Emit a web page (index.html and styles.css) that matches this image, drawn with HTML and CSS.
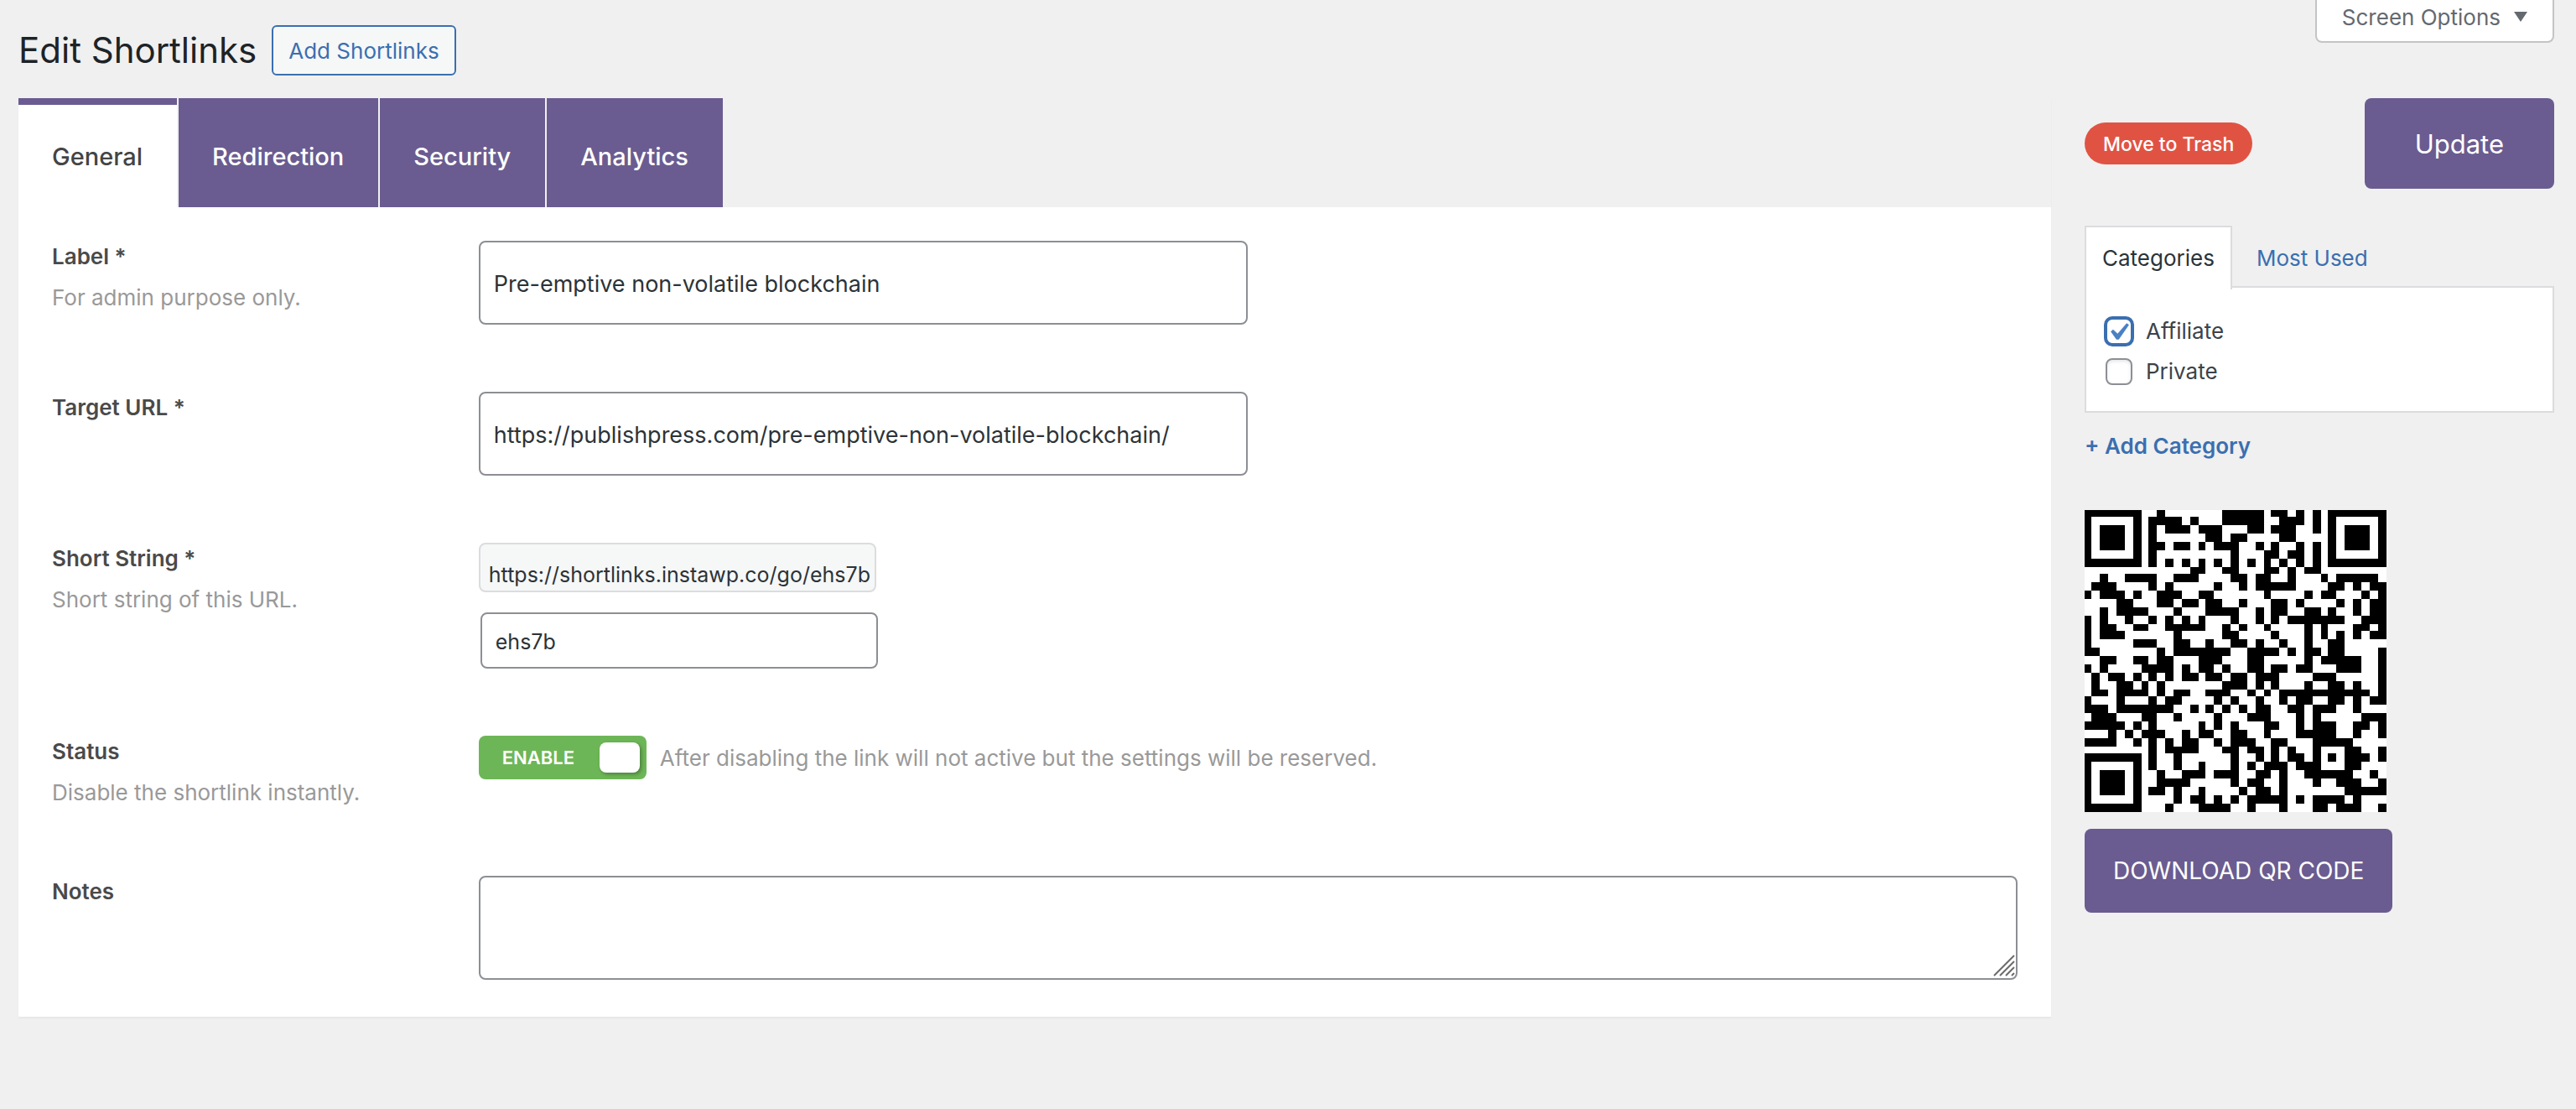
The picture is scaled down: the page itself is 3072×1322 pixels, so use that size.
FILE: index.html
```html
<!DOCTYPE html>
<html lang="en">
<head>
    <meta charset="UTF-8">
    <meta name="viewport" content="width=device-width, initial-scale=1.0">
    <title>Edit Shortlinks</title>
    <link rel="stylesheet" href="styles.css">
</head>
<body>
    <header class="page-header">
        <div class="page-title">
            <h1>Edit Shortlinks</h1>
            <a href="#" class="title-action">Add Shortlinks</a>
        </div>
        <button type="button" class="screen-options">
            Screen Options
            <svg width="16" height="12" viewBox="0 0 16 12" aria-hidden="true"><path d="M0 0h16L8 12z" fill="currentColor"/></svg>
        </button>
    </header>

    <form class="page-body">
        <main class="editor">
            <nav class="tabs">
                <a href="#general" class="tab active">General</a>
                <a href="#redirection" class="tab">Redirection</a>
                <a href="#security" class="tab">Security</a>
                <a href="#analytics" class="tab">Analytics</a>
            </nav>

            <section class="panel" id="general">
                <div class="field">
                    <div class="field-info">
                        <label for="linkLabel">Label *</label>
                        <p>For admin purpose only.</p>
                    </div>
                    <div class="field-control">
                        <input type="text" id="linkLabel" class="text-input" value="Pre-emptive non-volatile blockchain">
                    </div>
                </div>

                <div class="field">
                    <div class="field-info">
                        <label for="targetUrl">Target URL *</label>
                    </div>
                    <div class="field-control">
                        <input type="text" id="targetUrl" class="text-input" value="https://publishpress.com/pre-emptive-non-volatile-blockchain/">
                    </div>
                </div>

                <div class="field">
                    <div class="field-info">
                        <label for="shortString">Short String *</label>
                        <p>Short string of this URL.</p>
                    </div>
                    <div class="field-control short-string">
                        <input type="text" class="short-preview" value="https://shortlinks.instawp.co/go/ehs7b" aria-label="Short URL" readonly>
                        <input type="text" id="shortString" class="short-input" value="ehs7b">
                    </div>
                </div>

                <div class="field">
                    <div class="field-info">
                        <label for="status">Status</label>
                        <p>Disable the shortlink instantly.</p>
                    </div>
                    <div class="field-control status-control">
                        <label class="switch">
                            <input type="checkbox" id="status" checked>
                            <span class="switch-text">ENABLE</span>
                            <span class="switch-knob"></span>
                        </label>
                        <span class="help-text">After disabling the link will not active but the settings will be reserved.</span>
                    </div>
                </div>

                <div class="field">
                    <div class="field-info">
                        <label for="notes">Notes</label>
                    </div>
                    <div class="field-control notes-control">
                        <textarea id="notes" class="notes-input"></textarea>
                        <svg class="notes-grip" width="26" height="26" viewBox="0 0 26 26" aria-hidden="true">
                            <path d="M1 25L25 1M8 25L25 8M15 25L25 15M22 25L25 22" stroke="#6b6b6b" stroke-width="2" fill="none"/>
                        </svg>
                    </div>
                </div>
            </section>
        </main>

        <aside class="sidebar">
            <div class="publish-actions">
                <button type="button" class="trash-button">Move to Trash</button>
                <button type="submit" class="update-button">Update</button>
            </div>

            <div class="category-tabs">
                <a href="#categories" class="category-tab active">Categories</a>
                <a href="#most-used" class="category-tab">Most Used</a>
            </div>
            <div class="category-list" id="categories">
                <label><input type="checkbox" class="focused" checked> Affiliate</label>
                <label><input type="checkbox"> Private</label>
            </div>
            <a href="#" class="add-category">+ Add Category</a>

            <svg class="qr-code" id="qrCode" viewBox="0 0 360 360" role="img" aria-label="QR code"></svg>
            <button type="button" class="download-button">DOWNLOAD QR CODE</button>
        </aside>
    </form>

    <script src="script.js"></script>
</body>
</html>
```

FILE: styles.css
```css
* {
    margin: 0;
    padding: 0;
    box-sizing: border-box;
}

body {
    font-family: Inter, "Liberation Sans", sans-serif;
    font-size: 26px;
    line-height: 39px;
    background: #f0f0f0;
    color: #3c434a;
    min-height: 100vh;
}

a {
    color: #3a6fb0;
    text-decoration: none;
}

button,
input,
textarea {
    font-family: inherit;
    font-size: inherit;
    color: inherit;
}

button {
    border: none;
    cursor: pointer;
}

/* Header */

.page-header {
    display: flex;
    justify-content: space-between;
    align-items: flex-start;
    padding: 0 26px 27px 22px;
}

.page-title {
    display: flex;
    align-items: center;
    gap: 18px;
    padding-top: 30px;
}

h1 {
    font-size: 42px;
    font-weight: 400;
    line-height: 60px;
    color: #1d2327;
}

.title-action {
    height: 60px;
    padding: 0 18px;
    line-height: 58px;
    border: 2px solid #3a6fb0;
    border-radius: 6px;
    background: #f6f7f7;
}

.screen-options {
    display: flex;
    align-items: center;
    gap: 16px;
    height: 51px;
    padding: 0 30px 9px;
    background: #fff;
    border: 2px solid #c3c4c7;
    border-top: none;
    border-radius: 0 0 8px 8px;
    color: #646970;
}

.page-body {
    display: flex;
    align-items: flex-start;
    gap: 40px;
    padding: 0 26px 40px 22px;
}

/* Tabs */

.editor {
    flex: 1;
    min-width: 0;
    box-shadow: 0 2px 2px rgba(0, 0, 0, 0.04);
}

.tabs {
    display: flex;
    gap: 2px;
}

.tab {
    height: 130px;
    padding: 8px 41px 0 40px;
    line-height: 124px;
    font-size: 29px;
    font-weight: 500;
    background: #6a5c90;
    color: #fff;
}

.tab.active {
    padding-top: 0;
    border-top: 8px solid #6a5c90;
    background: #fff;
    color: #444;
}

/* Fields */

.panel {
    background: #fff;
    padding-bottom: 4px;
}

.field {
    display: grid;
    grid-template-columns: 20% 1fr;
    gap: 40px;
    padding: 40px;
}

.field-info {
    display: flex;
    flex-direction: column;
    gap: 10px;
}

.field-info label {
    line-height: 38px;
    font-weight: 600;
    color: #4a4a4a;
}

.field-info p,
.help-text {
    color: #999;
}

.text-input,
.short-input,
.short-preview,
.notes-input {
    display: block;
    border: 2px solid #8c8f94;
    border-radius: 8px;
    background: #fff;
    color: #2c3338;
}

.text-input {
    width: 50%;
    height: 100px;
    padding: 2px 16px 0;
    font-size: 27px;
}

.short-string {
    display: flex;
    flex-direction: column;
    gap: 24px;
}

.short-preview {
    width: 474px;
    height: 59px;
    padding: 16px 0 0 10px;
    font-size: 25px;
    border-color: #dcdcde;
    background: #f6f7f7;
}

.short-input {
    width: 474px;
    height: 67px;
    margin-left: 2px;
    padding: 2px 16px 0;
    font-size: 25px;
}

.status-control {
    display: flex;
    align-items: flex-start;
    gap: 16px;
}

.switch {
    position: relative;
    display: flex;
    align-items: center;
    justify-content: space-between;
    width: 200px;
    height: 52px;
    padding: 0 8px 0 28px;
    border-radius: 8px;
    background: #6db657;
    cursor: pointer;
}

.switch input {
    position: absolute;
    inset: 0;
    opacity: 0;
}

.switch-text {
    font-size: 22px;
    font-weight: 600;
    color: #fff;
}

.switch-knob {
    width: 48px;
    height: 36px;
    border-radius: 8px;
    background: #fff;
    box-shadow: 2px 2px 4px rgba(0, 0, 0, 0.3);
}

.help-text {
    line-height: 54px;
}

.notes-control {
    position: relative;
}

.notes-input {
    width: 100%;
    height: 124px;
    padding: 4px 12px;
    resize: none;
}

.notes-grip {
    position: absolute;
    right: 3px;
    bottom: 4px;
    pointer-events: none;
}

/* Sidebar */

.sidebar {
    display: flex;
    flex-direction: column;
    align-items: flex-start;
    width: 560px;
}

.publish-actions {
    display: flex;
    align-items: center;
    justify-content: space-between;
    width: 100%;
    margin-bottom: 44px;
}

.trash-button {
    height: 50px;
    padding: 2px 22px 0;
    border-radius: 25px;
    background: #e05343;
    color: #fff;
    font-size: 23px;
    font-weight: 500;
}

.update-button {
    height: 108px;
    padding: 0 60px;
    border-radius: 8px;
    background: #6a5c90;
    color: #fff;
    font-size: 31px;
}

.category-tabs {
    display: flex;
    gap: 8px;
}

.category-tab {
    height: 74px;
    padding: 17px 19px;
    border: 2px solid transparent;
    border-bottom: none;
}

.category-tab.active {
    position: relative;
    margin-bottom: -2px;
    height: 76px;
    border-color: #dcdcde;
    background: #fff;
    color: #2c3338;
}

.category-list {
    display: flex;
    flex-direction: column;
    gap: 8px;
    width: 100%;
    margin-top: -2px;
    padding: 32px 23px 27px;
    border: 2px solid #dcdcde;
    background: #fff;
}

.category-list label {
    display: flex;
    align-items: center;
    gap: 16px;
    line-height: 40px;
}

.category-list input {
    appearance: none;
    width: 32px;
    height: 32px;
    border: 2px solid #8c8f94;
    border-radius: 8px;
    background: #fff;
    box-shadow: inset 0 2px 4px rgba(0, 0, 0, 0.1);
}

.category-list input:checked {
    background: #fff url("data:image/svg+xml;utf8,<svg xmlns='http://www.w3.org/2000/svg' viewBox='0 0 20 20'><path d='M14.83 4.89l1.34.94-5.81 8.38H9.02L5.78 9.67l1.34-1.25 2.57 2.4z' fill='%234a80c4'/></svg>") -8px -6px / 42px no-repeat;
}

.category-list input.focused {
    border-color: #3a6fb0;
    box-shadow: 0 0 0 2px #3a6fb0;
}

.add-category {
    margin-top: 20px;
    font-weight: 600;
}

.qr-code {
    width: 360px;
    height: 360px;
    margin: 57px 0 20px;
    background: #fff;
}

.download-button {
    height: 100px;
    padding: 0 34px;
    border-radius: 8px;
    background: #6a5c90;
    color: #fff;
    font-size: 28px;
}
```

FILE: script.js
```js
// Dark runs of every QR row: "start-end" in modules, end not included
const qrRows = [
    '0-7 9-10 17-22 23-25 26-27 28-29 30-37',
    '0-1 6-7 8-12 13-14 17-22 24-27 28-29 30-31 36-37',
    '0-1 2-5 6-7 8-9 10-13 14-17 20-22 23-26 28-29 30-31 32-35 36-37',
    '0-1 2-5 6-7 8-9 15-17 18-20 24-26 30-31 32-35 36-37',
    '0-1 2-5 6-7 8-10 11-13 14-15 16-19 21-22 23-24 26-27 28-29 30-31 32-35 36-37',
    '0-1 6-7 8-9 18-19 22-24 25-27 28-29 30-31 36-37',
    '0-7 8-9 10-11 12-13 14-15 16-17 18-19 20-21 22-23 24-25 26-27 28-29 30-37',
    '13-15 17-19 22-24 25-26 27-29',
    '2-3 5-9 11-14 18-20 21-23 25-26 29-30 31-36',
    '1-4 8-9 10-11 16-17 19-20 21-26 30-32 33-34 35-37',
    '0-1 2-5 6-7 9-12 14-16 22-23 27-28 29-31 34-35 36-37',
    '4-6 9-11 12-14 15-17 19-20 23-25 26-27 31-32 33-34 35-37',
    '2-3 4-8 11-12 15-19 21-22 23-25 27-29 30-31 33-34 35-37',
    '0-1 2-3 5-6 8-9 10-11 12-13 14-15 18-19 21-22 23-24 25-32 34-37',
    '0-1 2-4 6-8 10-15 17-18 19-20 22-23 27-28 29-30 33-35 36-37',
    '0-1 2-5 11-12 17-19 23-24 27-28 29-30 31-32 33-34 35-37',
    '0-1 6-9 11-13 15-16 18-20 21-22 24-25 27-28 30-32',
    '0-2 9-10 11-18 20-24 25-26 27-29 30-32 36-37',
    '2-4 6-8 9-11 14-17 20-22 27-28 29-34 36-37',
    '0-1 2-3 7-11 12-13 14-16 17-18 20-22 23-25 26-28 31-34 36-37',
    '1-2 3-5 6-7 8-9 10-11 12-14 15-17 18-20 21-24 28-31 36-37',
    '1-2 4-6 7-8 9-10 17-20 21-22 23-24 27-28 30-32 33-34 36-37',
    '1-3 4-8 9-10 11-13 15-18 20-21 22-23 24-35 36-37',
    '0-1 4-5 8-9 10-12 16-17 18-19 21-22 24-25 26-28 30-32 33-34 35-37',
    '0-3 4-11 13-14 15-16 17-18 19-20 21-23 25-27 28-31 33-34',
    '1-4 7-9 11-12 16-17 20-23 26-27 28-29 34-37',
    '0-5 6-7 8-9 14-15 16-17 18-19 22-24 26-27 28-31 33-35 36-37',
    '3-4 5-6 7-10 12-13 14-16 18-20 22-23 26-31 33-34 36-37',
    '0-4 6-7 8-9 10-11 12-14 16-17 18-21 23-25 28-33',
    '8-9 10-14 17-19 20-22 23-24 25-26 28-29 32-34 36-37',
    '0-7 8-9 11-12 18-19 21-22 23-24 25-27 28-29 30-31 32-35 36-37',
    '0-1 6-7 8-9 11-12 14-15 18-19 20-21 22-25 26-29 32-34',
    '0-1 2-5 6-7 9-10 12-15 16-19 21-23 24-25 27-33 35-36',
    '0-1 2-5 6-7 9-13 18-19 20-22 24-25 28-29 31-34 36-37',
    '0-1 2-5 6-7 8-10 11-12 14-15 19-20 21-23 24-25 32-37',
    '0-1 6-7 11-12 13-15 16-17 18-19 20-25 26-27 28-32 33-34',
    '0-7 10-11 14-18 20-21 24-25 28-30 31-34 36-37'
];

// Module edges are snapped to even pixels so the squares stay sharp
function edge(index) {
    return Math.floor(index * 180 / qrRows.length) * 2;
}

let path = '';
qrRows.forEach((row, y) => {
    row.split(' ').forEach(run => {
        const [start, end] = run.split('-').map(Number);
        path += `M${edge(start)} ${edge(y)}H${edge(end)}V${edge(y + 1)}H${edge(start)}z`;
    });
});

const qrPath = document.createElementNS('http://www.w3.org/2000/svg', 'path');
qrPath.setAttribute('d', path);
document.getElementById('qrCode').appendChild(qrPath);
```
